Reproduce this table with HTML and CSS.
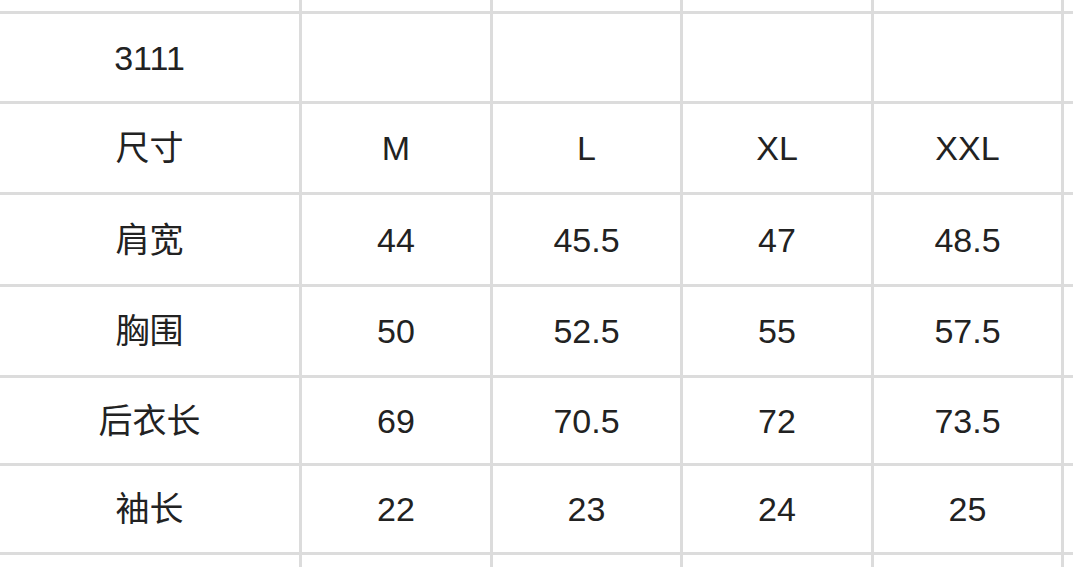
FILE: index.html
```html
<!DOCTYPE html>
<html lang="zh">
<head>
<meta charset="utf-8">
<link rel="stylesheet" href="styles.css">
</head>
<body>
<div class="sheet">
  <div class="cell"></div><div class="cell"></div><div class="cell"></div><div class="cell"></div><div class="cell"></div><div class="cell"></div>
  <div class="cell">3111</div><div class="cell"></div><div class="cell"></div><div class="cell"></div><div class="cell"></div><div class="cell"></div>
  <div class="cell">尺寸</div><div class="cell">M</div><div class="cell">L</div><div class="cell">XL</div><div class="cell">XXL</div><div class="cell"></div>
  <div class="cell">肩宽</div><div class="cell">44</div><div class="cell">45.5</div><div class="cell">47</div><div class="cell">48.5</div><div class="cell"></div>
  <div class="cell">胸围</div><div class="cell">50</div><div class="cell">52.5</div><div class="cell">55</div><div class="cell">57.5</div><div class="cell"></div>
  <div class="cell">后衣长</div><div class="cell">69</div><div class="cell">70.5</div><div class="cell">72</div><div class="cell">73.5</div><div class="cell"></div>
  <div class="cell">袖长</div><div class="cell">22</div><div class="cell">23</div><div class="cell">24</div><div class="cell">25</div><div class="cell"></div>
  <div class="cell"></div><div class="cell"></div><div class="cell"></div><div class="cell"></div><div class="cell"></div><div class="cell"></div>
</div>
</body>
</html>
```
FILE: styles.css
```css
html, body {
  margin: 0;
  padding: 0;
  background: #ffffff;
  overflow: hidden;
}
.sheet {
  width: 1073px;
  height: 567px;
  display: grid;
  grid-template-columns: 299px 188px 187px 188px 187px 1fr;
  grid-template-rows: 11px 87px 88px 89px 88px 85px 86px 1fr;
  gap: 3px;
  background: #dcdcdc;
  font-family: "Liberation Sans", "Noto Sans CJK SC", sans-serif;
  font-size: 34px;
  color: #222222;
}
.cell {
  background: #ffffff;
  display: flex;
  align-items: center;
  justify-content: center;
  overflow: hidden;
  line-height: 1;
}
```
